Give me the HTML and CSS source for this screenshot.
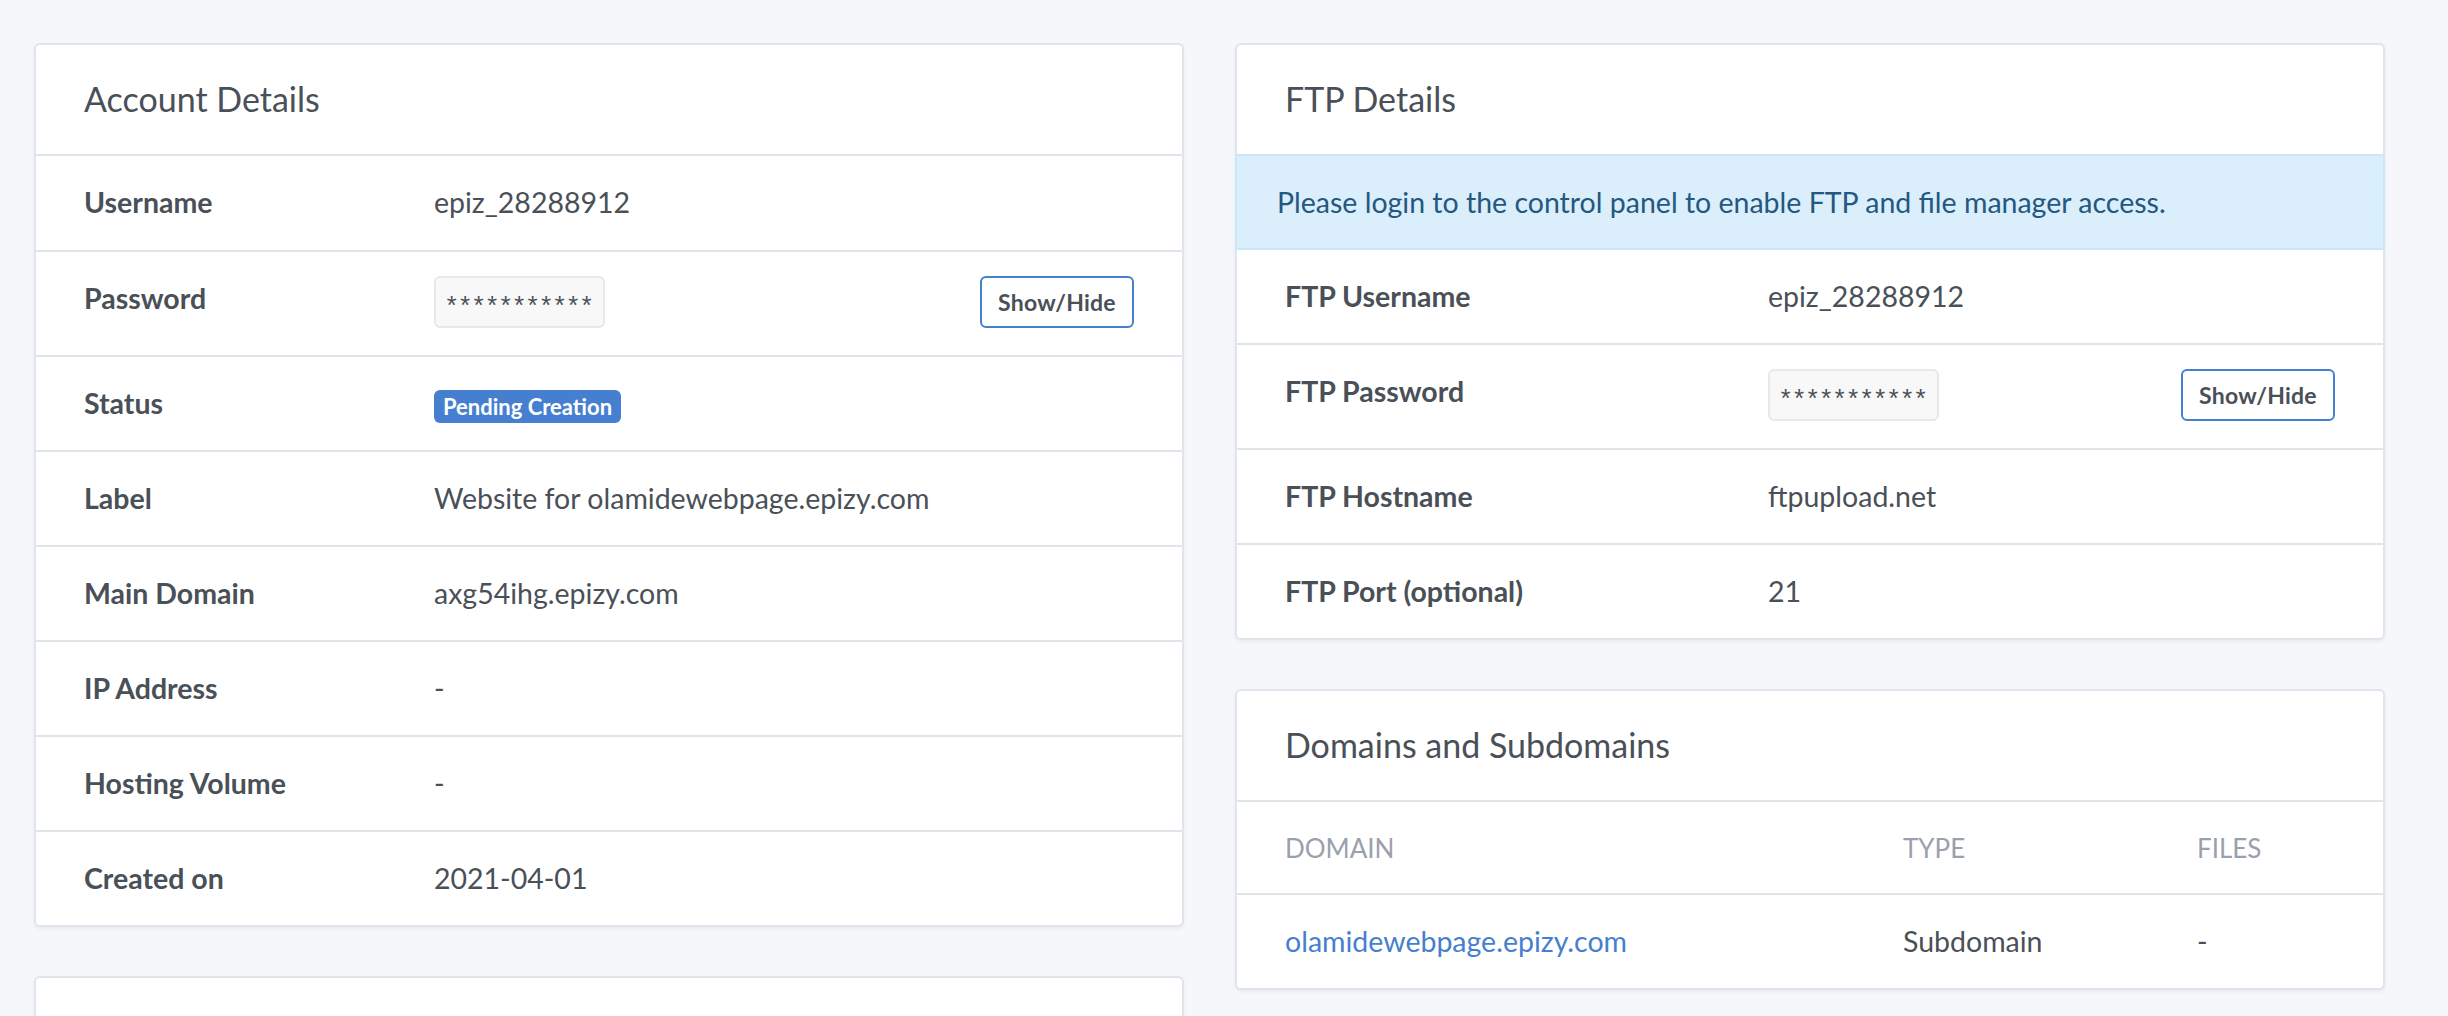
FILE: index.html
```html
<!DOCTYPE html>
<html lang="en">
<head>
<meta charset="utf-8">
<title>Account</title>
<link rel="stylesheet" href="styles.css">
</head>
<body>
<div class="page">
  <div class="col">
    <section class="card">
      <div class="card-header"><h3 class="card-title">Account Details</h3></div>
      <div class="kv kv-account">
        <div class="kv-row kv-row-first"><div class="kv-key">Username</div><div class="kv-val">epiz_28288912</div></div>
        <div class="kv-row kv-row-tall"><div class="kv-key">Password</div><div class="kv-val kv-split"><code class="secret">***********</code><button class="btn-outline" type="button">Show/Hide</button></div></div>
        <div class="kv-row"><div class="kv-key">Status</div><div class="kv-val"><span class="badge">Pending Creation</span></div></div>
        <div class="kv-row"><div class="kv-key">Label</div><div class="kv-val">Website for olamidewebpage.epizy.com</div></div>
        <div class="kv-row"><div class="kv-key">Main Domain</div><div class="kv-val">axg54ihg.epizy.com</div></div>
        <div class="kv-row"><div class="kv-key">IP Address</div><div class="kv-val">-</div></div>
        <div class="kv-row"><div class="kv-key">Hosting Volume</div><div class="kv-val">-</div></div>
        <div class="kv-row"><div class="kv-key">Created on</div><div class="kv-val">2021-04-01</div></div>
      </div>
    </section>
    <section class="card card-stub">
      <div class="card-header"></div>
    </section>
  </div>
  <div class="col">
    <section class="card">
      <div class="card-header"><h3 class="card-title">FTP Details</h3></div>
      <div class="alert-info">Please login to the control panel to enable FTP and file manager access.</div>
      <div class="kv kv-ftp">
        <div class="kv-row"><div class="kv-key">FTP Username</div><div class="kv-val">epiz_28288912</div></div>
        <div class="kv-row kv-row-tall"><div class="kv-key">FTP Password</div><div class="kv-val kv-split"><code class="secret">***********</code><button class="btn-outline" type="button">Show/Hide</button></div></div>
        <div class="kv-row"><div class="kv-key">FTP Hostname</div><div class="kv-val">ftpupload.net</div></div>
        <div class="kv-row"><div class="kv-key">FTP Port (optional)</div><div class="kv-val">21</div></div>
      </div>
    </section>
    <section class="card">
      <div class="card-header"><h3 class="card-title">Domains and Subdomains</h3></div>
      <div class="dtable">
        <div class="dt-row dt-head"><div class="dt-cell">Domain</div><div class="dt-cell">Type</div><div class="dt-cell">Files</div></div>
        <div class="dt-row"><div class="dt-cell"><a class="link" href="#">olamidewebpage.epizy.com</a></div><div class="dt-cell">Subdomain</div><div class="dt-cell">-</div></div>
      </div>
    </section>
  </div>
</div>
</body>
</html>
```
FILE: styles.css
```css
* { box-sizing: border-box; }
html, body { margin: 0; padding: 0; }
body {
  background: #f5f7fb;
  font-family: "Lato", "Liberation Sans", sans-serif;
  font-size: 28.5px;
  line-height: 1.5;
  color: #495057;
  height: 1016px;
  overflow: hidden;
}
.page {
  display: grid;
  grid-template-columns: 1150px 1150px;
  column-gap: 51px;
  padding: 43px 0 0 34px;
  align-items: start;
}
.col { display: flex; flex-direction: column; gap: 49px; }
.card {
  background: #fff;
  border: 2px solid rgba(0, 40, 100, .12);
  border-radius: 6px;
  box-shadow: 0 2px 4px rgba(0, 0, 0, .05);
}
.card-stub { height: 400px; }
.card-header {
  height: 111px;
  border-bottom: 2px solid rgba(0, 40, 100, .12);
  display: flex;
  align-items: center;
  padding: 0 48px;
}
.card-title { margin: 0; font-size: 34px; font-weight: 400; line-height: 1.2; }

.kv-row {
  display: grid;
  align-items: start;
  min-height: 95px;
  border-top: 2px solid rgba(0, 40, 100, .12);
}
.kv-row:first-child { border-top: 0; min-height: 93px; }
.kv-account .kv-row-first { min-height: 94px; }
.kv-account .kv-row { grid-template-columns: 374px 1fr; }
.kv-ftp .kv-row { grid-template-columns: 507px 1fr; }
.kv .kv-row-tall { min-height: 105px; }
.kv-key { padding: 24px 24px 24px 48px; font-weight: 700; line-height: 45px; }
.kv-val { padding: 24px 48px 24px 24px; line-height: 45px; }
.kv-split { display: flex; justify-content: space-between; align-items: flex-start; }

.secret {
  font-family: "Liberation Mono", monospace;
  font-size: 25.5px;
  letter-spacing: -1.8px;
  line-height: 34px;
  height: 52px;
  padding: 14px 10px 0 8px;
  border: 2px solid #e7e8ea;
  background: #f8f8f8;
  border-radius: 6px;
  color: #495057;
}
.btn-outline {
  font-family: inherit;
  font-size: 23px;
  font-weight: 700;
  letter-spacing: .01em;
  line-height: 48px;
  height: 52px;
  width: 154px;
  padding: 0;
  color: #495057;
  background: #fff;
  border: 2px solid #467fcf;
  border-radius: 6px;
}
.badge {
  display: inline-block;
  font-size: 22px;
  font-weight: 700;
  line-height: 22px;
  padding: 5.5px 9px;
  border-radius: 6px;
  background: #467fcf;
  color: #fff;
  vertical-align: middle;
}
.alert-info {
  margin: -2px -2px 0;
  padding: 24px 40px 23px;
  line-height: 45px;
  background: #daeefc;
  border: 2px solid #cbe7fb;
  color: #24587e;
}

.dt-row {
  display: grid;
  grid-template-columns: 642px 294px 1fr;
  align-items: center;
  min-height: 93px;
}
.dt-row + .dt-row { border-top: 2px solid rgba(0, 40, 100, .12); min-height: 95px; }
.dt-head { min-height: 91px; }
.dt-cell { padding: 24px; line-height: 45px; }
.dt-cell:first-child { padding-left: 48px; }
.dt-head .dt-cell {
  font-size: 26px;
  line-height: 42px;
  color: #9aa0ac;
  text-transform: uppercase;
  font-weight: 400;
}
.link { color: #467fcf; text-decoration: none; }
```
